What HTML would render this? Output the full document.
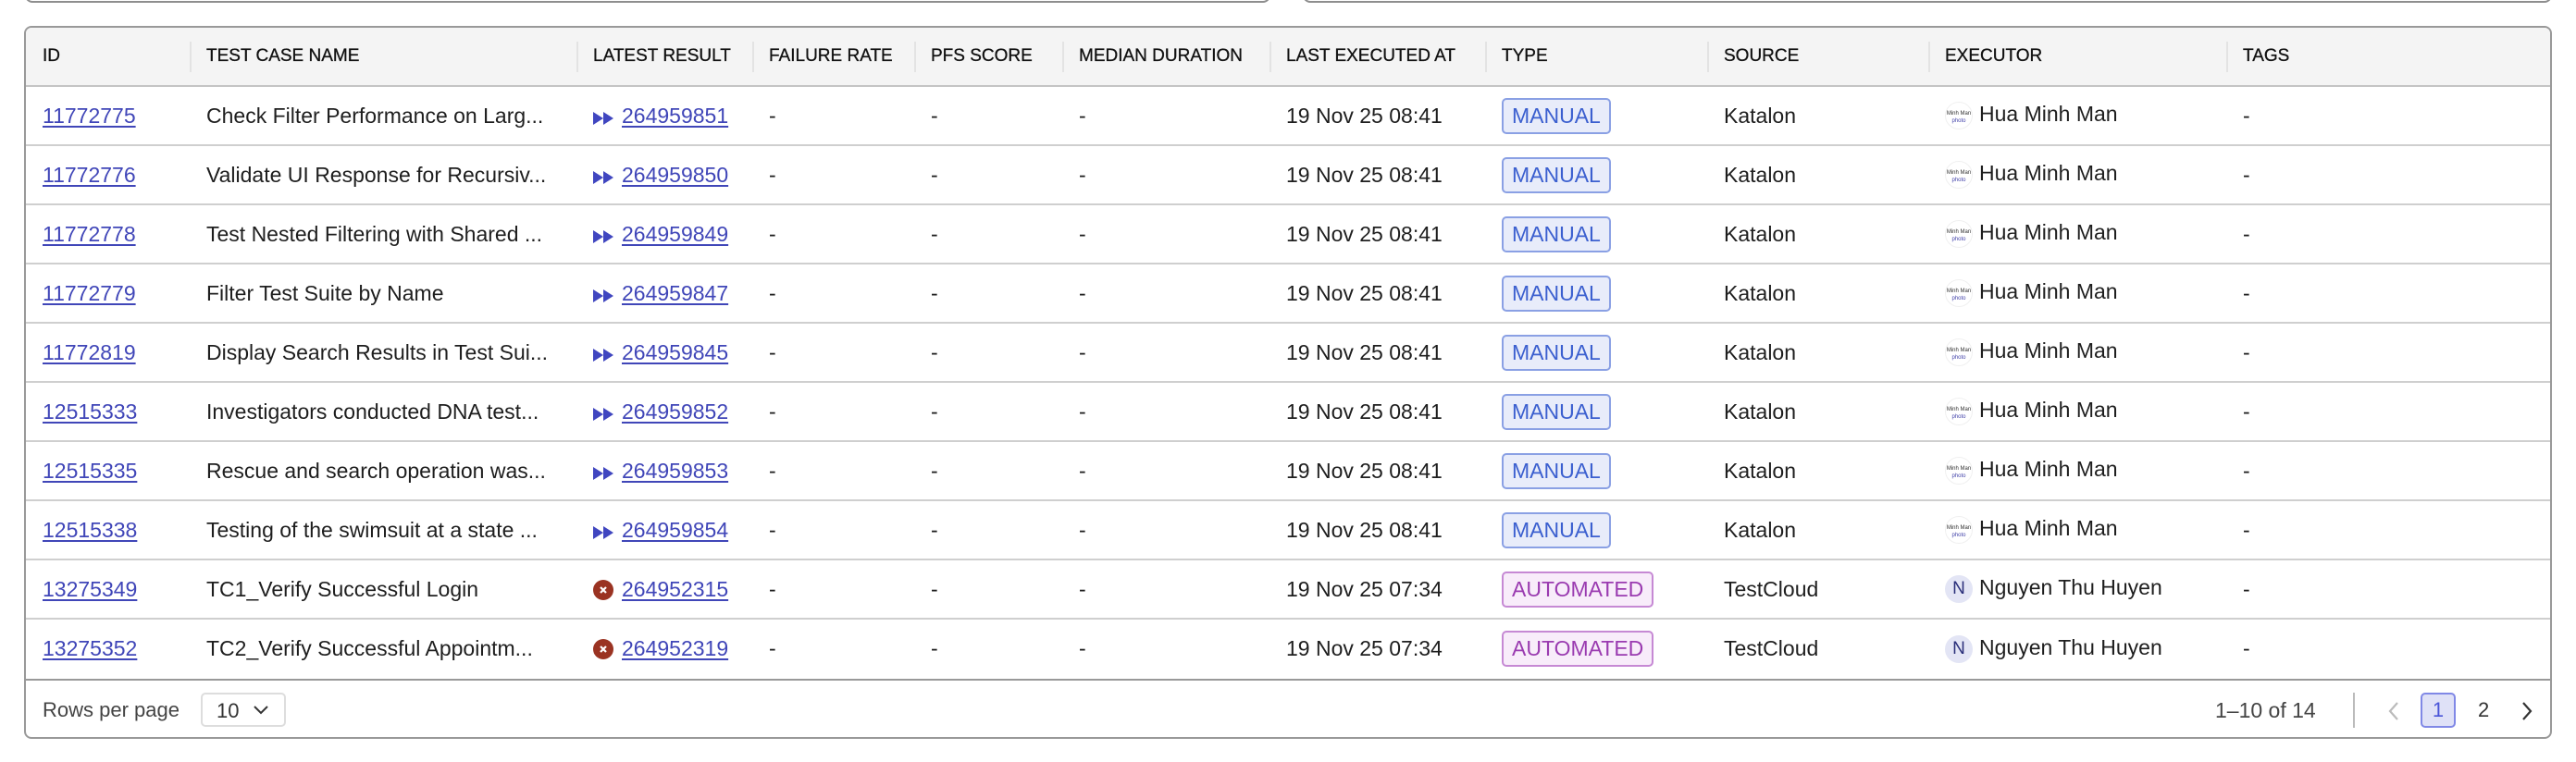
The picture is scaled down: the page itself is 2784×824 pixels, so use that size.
<!DOCTYPE html>
<html><head><meta charset="utf-8"><style>
*{box-sizing:border-box;margin:0;padding:0}
body{width:2784px;height:824px;background:#fff;font-family:"Liberation Sans",sans-serif;color:#1e1e1e;position:relative;overflow:hidden}
.topbox{position:absolute;top:-30px;height:33px;border:2px solid #8e8e8e;border-radius:8px}
.wrap{position:absolute;left:26px;top:28px;width:2732px;height:771px;border:2px solid #999;border-radius:8px;overflow:hidden}
table{border-collapse:collapse;table-layout:fixed;width:2730px}
th{height:63px;background:#f4f4f4;font-size:19px;font-weight:normal;text-align:left;padding:0 18px;border-bottom:2px solid #c4c4c4;position:relative;color:#111;-webkit-text-stroke:0.3px #111}
th+th::before{content:"";position:absolute;left:0;top:15px;height:33px;border-left:2px solid #e3e3e3}
td{height:64px;font-size:23px;padding:0 18px;border-bottom:2px solid #cfcfcf;white-space:nowrap;overflow:hidden}
tr:last-child td{border-bottom:none}
a{color:#4046b8;text-decoration:underline;text-underline-offset:3px}
.st{display:inline-block;vertical-align:-2px;margin-right:9px}
.badge{display:inline-block;font-size:23px;padding:4px 9px;border-radius:5px;line-height:27px}
.m{background:#e8ecfa;border:2px solid #8aa0e4;color:#3b5fcf}
.au{background:#f8ecfa;border:2px solid #c689d4;color:#9a3bb0}
.av{display:inline-block;width:30px;height:30px;border-radius:50%;vertical-align:middle;margin-right:7px;text-align:center;font-size:19px;line-height:30px}
.avn{background:#e3e5f5;color:#2a2f7a}
.avp{background:#fff;border:1px solid #f0f0f0;font-size:6px;line-height:8px;padding-top:8px;color:#333}
.foot{position:absolute;left:0;top:704px;width:100%;height:65px;border-top:2px solid #999}
</style></head><body>
<div class="topbox" style="left:27px;width:1346px"></div>
<div class="topbox" style="left:1408px;width:1350px"></div>
<div class="wrap">
<table>
<colgroup><col style="width:177px"><col style="width:418px"><col style="width:190px"><col style="width:175px"><col style="width:160px"><col style="width:224px"><col style="width:233px"><col style="width:240px"><col style="width:239px"><col style="width:322px"><col style="width:352px"></colgroup>
<tr><th>ID</th><th>TEST CASE NAME</th><th>LATEST RESULT</th><th>FAILURE RATE</th><th>PFS SCORE</th><th>MEDIAN DURATION</th><th>LAST EXECUTED AT</th><th>TYPE</th><th>SOURCE</th><th>EXECUTOR</th><th>TAGS</th></tr>
<tr><td><a>11772775</a></td><td>Check Filter Performance on Larg...</td><td><svg class="st" width="22" height="14"><path d="M0 0L11 7L0 14Z M11 0L22 7L11 14Z" fill="#4046c0"/></svg><a>264959851</a></td><td>-</td><td>-</td><td>-</td><td>19 Nov 25 08:41</td><td><span class="badge m">MANUAL</span></td><td>Katalon</td><td><span class="av avp">Minh Man<br><span style="color:#44a">photo</span></span>Hua Minh Man</td><td>-</td></tr>
<tr><td><a>11772776</a></td><td>Validate UI Response for Recursiv...</td><td><svg class="st" width="22" height="14"><path d="M0 0L11 7L0 14Z M11 0L22 7L11 14Z" fill="#4046c0"/></svg><a>264959850</a></td><td>-</td><td>-</td><td>-</td><td>19 Nov 25 08:41</td><td><span class="badge m">MANUAL</span></td><td>Katalon</td><td><span class="av avp">Minh Man<br><span style="color:#44a">photo</span></span>Hua Minh Man</td><td>-</td></tr>
<tr><td><a>11772778</a></td><td>Test Nested Filtering with Shared ...</td><td><svg class="st" width="22" height="14"><path d="M0 0L11 7L0 14Z M11 0L22 7L11 14Z" fill="#4046c0"/></svg><a>264959849</a></td><td>-</td><td>-</td><td>-</td><td>19 Nov 25 08:41</td><td><span class="badge m">MANUAL</span></td><td>Katalon</td><td><span class="av avp">Minh Man<br><span style="color:#44a">photo</span></span>Hua Minh Man</td><td>-</td></tr>
<tr><td><a>11772779</a></td><td>Filter Test Suite by Name</td><td><svg class="st" width="22" height="14"><path d="M0 0L11 7L0 14Z M11 0L22 7L11 14Z" fill="#4046c0"/></svg><a>264959847</a></td><td>-</td><td>-</td><td>-</td><td>19 Nov 25 08:41</td><td><span class="badge m">MANUAL</span></td><td>Katalon</td><td><span class="av avp">Minh Man<br><span style="color:#44a">photo</span></span>Hua Minh Man</td><td>-</td></tr>
<tr><td><a>11772819</a></td><td>Display Search Results in Test Sui...</td><td><svg class="st" width="22" height="14"><path d="M0 0L11 7L0 14Z M11 0L22 7L11 14Z" fill="#4046c0"/></svg><a>264959845</a></td><td>-</td><td>-</td><td>-</td><td>19 Nov 25 08:41</td><td><span class="badge m">MANUAL</span></td><td>Katalon</td><td><span class="av avp">Minh Man<br><span style="color:#44a">photo</span></span>Hua Minh Man</td><td>-</td></tr>
<tr><td><a>12515333</a></td><td>Investigators conducted DNA test...</td><td><svg class="st" width="22" height="14"><path d="M0 0L11 7L0 14Z M11 0L22 7L11 14Z" fill="#4046c0"/></svg><a>264959852</a></td><td>-</td><td>-</td><td>-</td><td>19 Nov 25 08:41</td><td><span class="badge m">MANUAL</span></td><td>Katalon</td><td><span class="av avp">Minh Man<br><span style="color:#44a">photo</span></span>Hua Minh Man</td><td>-</td></tr>
<tr><td><a>12515335</a></td><td>Rescue and search operation was...</td><td><svg class="st" width="22" height="14"><path d="M0 0L11 7L0 14Z M11 0L22 7L11 14Z" fill="#4046c0"/></svg><a>264959853</a></td><td>-</td><td>-</td><td>-</td><td>19 Nov 25 08:41</td><td><span class="badge m">MANUAL</span></td><td>Katalon</td><td><span class="av avp">Minh Man<br><span style="color:#44a">photo</span></span>Hua Minh Man</td><td>-</td></tr>
<tr><td><a>12515338</a></td><td>Testing of the swimsuit at a state ...</td><td><svg class="st" width="22" height="14"><path d="M0 0L11 7L0 14Z M11 0L22 7L11 14Z" fill="#4046c0"/></svg><a>264959854</a></td><td>-</td><td>-</td><td>-</td><td>19 Nov 25 08:41</td><td><span class="badge m">MANUAL</span></td><td>Katalon</td><td><span class="av avp">Minh Man<br><span style="color:#44a">photo</span></span>Hua Minh Man</td><td>-</td></tr>
<tr><td><a>13275349</a></td><td>TC1_Verify Successful Login</td><td><svg class="st" width="22" height="22" style="vertical-align:-4px"><circle cx="11" cy="11" r="11" fill="#9a3322"/><path d="M8 8L14 14M14 8L8 14" stroke="#fff" stroke-width="2.2"/></svg><a>264952315</a></td><td>-</td><td>-</td><td>-</td><td>19 Nov 25 07:34</td><td><span class="badge au">AUTOMATED</span></td><td>TestCloud</td><td><span class="av avn">N</span>Nguyen Thu Huyen</td><td>-</td></tr>
<tr><td><a>13275352</a></td><td>TC2_Verify Successful Appointm...</td><td><svg class="st" width="22" height="22" style="vertical-align:-4px"><circle cx="11" cy="11" r="11" fill="#9a3322"/><path d="M8 8L14 14M14 8L8 14" stroke="#fff" stroke-width="2.2"/></svg><a>264952319</a></td><td>-</td><td>-</td><td>-</td><td>19 Nov 25 07:34</td><td><span class="badge au">AUTOMATED</span></td><td>TestCloud</td><td><span class="av avn">N</span>Nguyen Thu Huyen</td><td>-</td></tr>
</table>
<div class="foot">
<div style="position:absolute;left:18px;top:19px;font-size:22px;color:#444">Rows per page</div>
<div style="position:absolute;left:189px;top:13px;width:92px;height:37px;border:2px solid #ddd;border-radius:5px;font-size:22px;padding:5px 0 0 15px;color:#333">10<svg style="position:absolute;left:55px;top:12px" width="16" height="10"><path d="M1 1L8 8L15 1" fill="none" stroke="#333" stroke-width="2"/></svg></div>
<div style="position:absolute;left:2366px;top:19px;font-size:23px;color:#444">1–10 of 14</div>
<div style="position:absolute;left:2515px;top:13px;height:38px;border-left:2px solid #bbb"></div>
<svg style="position:absolute;left:2552px;top:22px" width="14" height="22"><path d="M11 2L3 11L11 20" fill="none" stroke="#bbb" stroke-width="2.2"/></svg>
<div style="position:absolute;left:2588px;top:13px;width:38px;height:38px;border:2px solid #8088e6;background:#dfe1f7;border-radius:5px;color:#4a55d8;font-size:22px;text-align:center;line-height:34px">1</div>
<div style="position:absolute;left:2650px;top:19px;font-size:22px;color:#333">2</div>
<svg style="position:absolute;left:2696px;top:22px" width="14" height="22"><path d="M3 2L11 11L3 20" fill="none" stroke="#333" stroke-width="2.2"/></svg>
</div>
</div>
</body></html>
